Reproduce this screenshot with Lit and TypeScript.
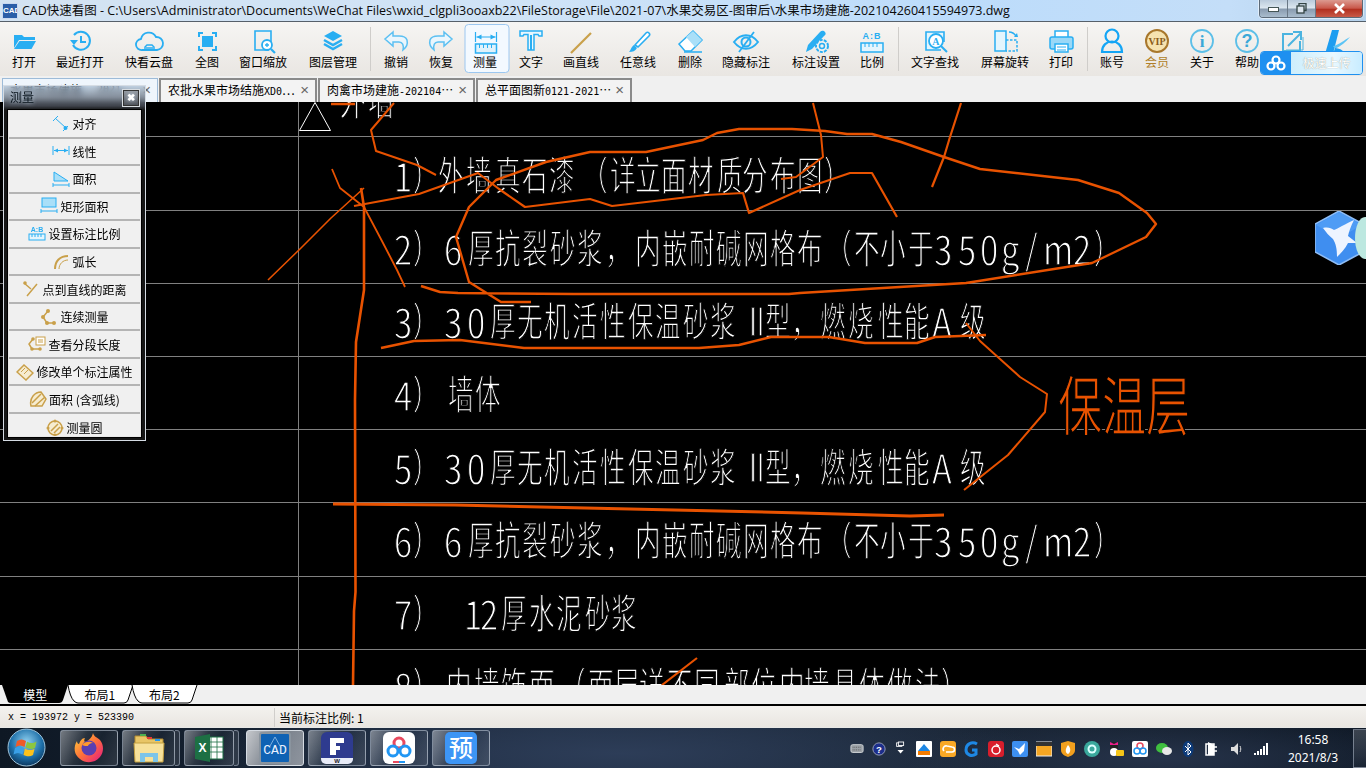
import { LitElement, html, css, svg } from "lit";
import { customElement } from "lit/decorators.js";

const B = "#29aef2";
const G = "#c9a04a";

const ic = (body: any, size = 32) => html`<svg class="ic" width=${size} height=${size} viewBox="0 0 ${size} ${size}">${body}</svg>`;

const toolIcons: Record<string, any> = {
  open: svg`<path d="M6 10h8l2 2h11v3H11L6 23z" fill="${B}"/><path d="M6 24l5.500-8H28l-4.500 8z" fill="${B}"/>`,
  recent: svg`<path d="M10 10a9 9 0 1 1-1 10" fill="none" stroke="${B}" stroke-width="2"/><path d="M6 15h8l-4 5z" fill="${B}"/><path d="M17 11v6h5" fill="none" stroke="${B}" stroke-width="2"/>`,
  cloud: svg`<path d="M9 25a5.500 5.500 0 0 1-1-11 8 8 0 0 1 15-2 6.500 6.500 0 0 1 1 13z" fill="none" stroke="${B}" stroke-width="1.800"/><path d="M12 25v-3l2-2h5l2 2v3M13 23h7" fill="none" stroke="${B}" stroke-width="1.500"/>`,
  full: svg`<path d="M8 12V8h4M21 8h4v4M25 21v4h-4M12 25H8v-4" fill="none" stroke="${B}" stroke-width="2"/><rect x="11" y="11" width="11" height="11" fill="${B}"/>`,
  zoom: svg`<path d="M22 25H8V6h16v11" fill="none" stroke="${B}" stroke-width="1.600"/><circle cx="20" cy="20" r="5" fill="#fff" stroke="${B}" stroke-width="1.800"/><path d="M18 20h4M20 18v4" stroke="${B}" stroke-width="1.300"/><path d="M24 24l4 4" stroke="${B}" stroke-width="2.200"/>`,
  layer: svg`<path d="M16 6l9 5-9 5-9-5z" fill="${B}"/><path d="M7 15l9 5 9-5M7 19l9 5 9-5" fill="none" stroke="${B}" stroke-width="2.500"/>`,
  undo: svg`<path d="M13 7l-8 7 8 7v-4h6c3.500 0 5 3 4 8 4-3 5-6 4-10-1-3-4-4-8-4h-6z" fill="#eaf6fd" stroke="#5cc0f2" stroke-width="1.500"/>`,
  redo: svg`<path d="M19 7l8 7-8 7v-4h-6c-3.500 0-5 3-4 8-4-3-5-6-4-10 1-3 4-4 8-4h6z" fill="#eaf6fd" stroke="#5cc0f2" stroke-width="1.500"/>`,
  measure: svg`<path d="M6 7v10M27 7v10M7 12h19" stroke="${B}" stroke-width="1.200" fill="none"/><path d="M7 12l5-2.500v5zM26 12l-5-2.500v5z" fill="${B}"/><rect x="6" y="19" width="21" height="9" fill="#dff2fc" stroke="${B}" stroke-width="1.500"/><path d="M10 19v4M14 19v4M18 19v4M22 19v4" stroke="${B}"/>`,
  text: svg`<path d="M5 6h22v5h-3l-1-1.500h-4V25h-6V9.500H9L8 11H5z" fill="#e8f7fe" stroke="${B}" stroke-width="1.500"/><path d="M15 10h2v15h-2z" fill="${B}"/>`,
  line: svg`<path d="M6 28L26 8" stroke="${G}" stroke-width="2.200"/>`,
  brush: svg`<path d="M13 20L24 8c2-2 5 1 3 3L16 22z" fill="#fff" stroke="${B}" stroke-width="1.600"/><path d="M12 20l3 3c-2 3-4 4-8 4 2-2 2-5 5-7z" fill="${B}"/>`,
  eraser: svg`<path d="M5 19L19 6l9 9-11 11h-6z" fill="#fff" stroke="${B}" stroke-width="1.500"/><path d="M12 12l9 10 7-7-9-9z" fill="#a9dff8"/><path d="M10 27h18" stroke="${B}" stroke-width="1.500"/>`,
  eye: svg`<path d="M4 17c7-9 17-9 24 0-7 9-17 9-24 0z" fill="none" stroke="${B}" stroke-width="2"/><circle cx="16" cy="17" r="4.500" fill="none" stroke="${B}" stroke-width="2"/><path d="M9 27L24 7" stroke="${B}" stroke-width="1.800"/>`,
  gear: svg`<path d="M6 27l2-7L20 7c2-2 4-1 5 0s1 3-1 4L12 24z" fill="${B}"/><circle cx="22" cy="21" r="6" fill="#f2f2f0" stroke="${B}" stroke-width="2" stroke-dasharray="3 1.200"/><circle cx="22" cy="21" r="2.500" fill="none" stroke="${B}" stroke-width="1.500"/>`,
  ratio: svg`<text x="16" y="14" text-anchor="middle" class="ab">A:B</text><rect x="5" y="18" width="22" height="9" fill="#e4f5fd" stroke="${B}" stroke-width="1.500"/><path d="M9 18v4M13 18v4M17 18v4M21 18v4" stroke="${B}"/>`,
  find: svg`<path d="M22 25H7V7h18v10" fill="#e4f5fd" stroke="${B}" stroke-width="1.600"/><circle cx="17" cy="16" r="7" fill="#fff" stroke="${B}" stroke-width="1.800"/><text x="17" y="20" text-anchor="middle" class="find">A</text><path d="M22 21l6 6" stroke="${B}" stroke-width="2"/>`,
  rotate: svg`<rect x="6" y="6" width="11" height="20" fill="#e4f5fd" stroke="${B}" stroke-width="1.500"/><path d="M17 15h11v11H17" fill="none" stroke="${B}" stroke-width="1.500" stroke-dasharray="2.500 1.500"/><path d="M20 7c3 0 5 1 7 4" fill="none" stroke="${B}" stroke-width="1.500"/><path d="M25 12l4 0-1-4z" fill="${B}"/>`,
  print: svg`<rect x="10" y="6" width="13" height="7" fill="#fff" stroke="${B}" stroke-width="1.500"/><rect x="5" y="12" width="23" height="12" rx="2" fill="#9ad8f7" stroke="${B}" stroke-width="1.500"/><rect x="10" y="19" width="13" height="8" fill="#fff" stroke="${B}" stroke-width="1.500"/><path d="M12 22h9M12 25h9" stroke="${B}"/>`,
  user: svg`<circle cx="16" cy="11" r="6.500" fill="none" stroke="#14a5f5" stroke-width="2.200"/><path d="M6 27c0-14 20-14 20 0z" fill="none" stroke="#14a5f5" stroke-width="2.200"/>`,
  vip: svg`<circle cx="16" cy="16" r="11" fill="#f6e3b0" stroke="#a8772c" stroke-width="2"/><text x="16" y="19.500" text-anchor="middle" class="vip">VIP</text>`,
  info: svg`<circle cx="16" cy="16" r="11" fill="none" stroke="#5cbfe8" stroke-width="1.800"/><text x="16" y="22" text-anchor="middle" class="inf">i</text>`,
  help: svg`<circle cx="16" cy="16" r="11" fill="none" stroke="#5cbfe8" stroke-width="1.800"/><text x="16" y="22" text-anchor="middle" class="hlp">?</text>`,
  out: svg`<path d="M24 16v10H7V9h10" fill="none" stroke="#4cb4e0" stroke-width="2"/><path d="M10 25h17V12" fill="none" stroke="#4cb4e0" stroke-width="1"/><path d="M12 21L25 8M17 7h8v8" fill="none" stroke="#4cb4e0" stroke-width="2"/>`,
  k: svg`<path d="M11 5h7L12 29H4z" fill="#1d9df0"/><path d="M12 21c6-1 11-6 17-9-4 5-9 9-15 12z" fill="#5cc4f5"/><path d="M14 23c4 0 8 2 11 6H12z" fill="#1d9df0"/>`,
};

const tools: [string, string, number][] = [
  ["打开", "open", 24], ["最近打开", "recent", 80], ["快看云盘", "cloud", 149], ["全图", "full", 207],
  ["窗口缩放", "zoom", 263], ["图层管理", "layer", 333], ["|", "", 370], ["撤销", "undo", 396], ["恢复", "redo", 441],
  ["测量", "measure", 486.5], ["文字", "text", 531], ["画直线", "line", 581], ["任意线", "brush", 638], ["删除", "eraser", 690],
  ["隐藏标注", "eye", 746], ["标注设置", "gear", 816], ["比例", "ratio", 872], ["|", "", 898], ["文字查找", "find", 935],
  ["屏幕旋转", "rotate", 1005], ["打印", "print", 1061], ["|", "", 1087], ["账号", "user", 1112], ["会员", "vip", 1157],
  ["关于", "info", 1202], ["帮助", "help", 1247], ["", "out", 1292], ["", "k", 1337],
];

const panelIcons: Record<string, any> = {
  align: svg`<path d="M3 3l11 10" stroke="${B}" fill="none"/><path d="M1 6l5-5M11 16l5-5" stroke="${B}"/><circle cx="13.500" cy="13" r="2" fill="${B}"/>`,
  linear: svg`<path d="M1 4v9M17 4v9M2 8.500h14" stroke="${B}" fill="none"/><path d="M2 8.500l4-2v4zM16 8.500l-4-2v4z" fill="${B}"/>`,
  area: svg`<path d="M2 2v9h14z" fill="#a9dff8" stroke="${B}"/><path d="M1 13v4M17 13v4M1 15h16" stroke="${B}"/>`,
  rect: svg`<rect x="2" y="1" width="14" height="9" fill="#a9dff8" stroke="${B}"/><path d="M1 12v4M17 12v4M1 14h16" stroke="${B}"/>`,
  ratio: svg`<text x="9" y="7" text-anchor="middle" class="ab2">A:B</text><rect x="1" y="9" width="16" height="6" fill="#e4f5fd" stroke="${B}"/><path d="M4 9v3M7 9v3M10 9v3M13 9v3" stroke="${B}"/>`,
  arc: svg`<path d="M3 16C3 8 8 3 16 3" fill="none" stroke="${G}" stroke-width="2"/><path d="M7 16c0-5 4-9 9-9" fill="none" stroke="${G}"/>`,
  dist: svg`<path d="M5 16L15 4M2 3l7 6" stroke="${G}" stroke-width="1.500" fill="none"/><circle cx="3" cy="3" r="1.800" fill="${G}"/>`,
  multi: svg`<path d="M8 3L3 9l4 6h8" fill="none" stroke="${G}" stroke-width="1.500"/><circle cx="8" cy="3" r="2" fill="${G}"/><circle cx="3" cy="9" r="2" fill="${G}"/><circle cx="7" cy="15" r="2" fill="${G}"/><circle cx="14" cy="15" r="2" fill="${G}"/>`,
  seg: svg`<path d="M5 4L1 9l3 5h8" fill="none" stroke="${G}" stroke-width="1.500"/><circle cx="5" cy="4" r="1.800" fill="${G}"/><circle cx="4" cy="14" r="1.800" fill="${G}"/><circle cx="12" cy="14" r="1.800" fill="${G}"/><rect x="8" y="2" width="9" height="8" fill="#fff" stroke="${G}"/><path d="M10 5h5M10 7h5" stroke="${G}"/>`,
  edit: svg`<path d="M1 9l7-7 9 8-7 7z" fill="#f6ecd0" stroke="${G}" stroke-width="1.500"/><path d="M5 9l4-4M8 11l4-4" stroke="${G}"/>`,
  aarc: svg`<path d="M2 16C0 8 6 2 12 2l5 7-4 7z" fill="#f6ecd0" stroke="${G}" stroke-width="1.500"/><path d="M3 13L12 4M6 16L16 7" stroke="${G}" stroke-width="1.500"/>`,
  circle: svg`<circle cx="9" cy="9" r="7" fill="#f6ecd0" stroke="${G}" stroke-width="1.500"/><path d="M5 12l7-7M8 14l6-6" stroke="${G}" stroke-width="1.500"/><circle cx="2" cy="9" r="1.500" fill="${G}"/><circle cx="16" cy="9" r="1.500" fill="${G}"/><circle cx="9" cy="2" r="1.500" fill="${G}"/><circle cx="9" cy="16" r="1.500" fill="${G}"/>`,
};

const panelRows: [string, string][] = [
  ["align", "对齐"], ["linear", "线性"], ["area", "面积"], ["rect", "矩形面积"], ["ratio", "设置标注比例"], ["arc", "弧长"],
  ["dist", "点到直线的距离"], ["multi", "连续测量"], ["seg", "查看分段长度"], ["edit", "修改单个标注属性"], ["aarc", "面积 (含弧线)"], ["circle", "测量圆"],
];

type Seg = [number, string];
const r3 = (n: string): Seg[] => [
  [394, n], [413, "）"], [444, "3"], [467, "0"], [490, "厚"], [517, "无"], [544, "机"], [572, "活"], [600, "性"], [628, "保"], [655, "温"], [683, "砂"], [710, "浆"],
  [744, "Ⅱ"], [765, "型"], [791, "，"], [820, "燃"], [848, "烧"], [878, "性"], [904, "能"], [932, "A"], [960, "级"],
];
const r2 = (n: string): Seg[] => [
  [394, n], [413, "）"], [444, "6"], [468, "厚"], [495, "抗"], [522, "裂"], [550, "砂"], [577, "浆"], [605, "，"], [635, "内"], [662, "嵌"], [689, "耐"], [716, "碱"], [743, "网"], [770, "格"], [797, "布"],
  [826, "（"], [854, "不"], [880, "小"], [908, "于"], [934, "3"], [958, "5"], [980, "0"], [1001, "g"], [1025, "/"], [1043, "m"], [1073, "2"], [1094, "）"],
];
const rows: [number, Seg[]][] = [
  [117, [[340, "外"], [368, "墙"]]],
  [192, [[394, "1"], [413, "）"], [438, "外"], [466, "墙"], [495, "真"], [522, "石"], [549, "漆"], [582, "（"], [610, "详"], [635, "立"], [661, "面"], [688, "材"], [717, "质"], [742, "分"], [770, "布"], [797, "图"], [824, "）"]]],
  [265, r2("2")],
  [338, r3("3")],
  [411, [[394, "4"], [413, "）"], [448, "墙"], [475, "体"]]],
  [484, r3("5")],
  [557, r2("6")],
  [630, [[394, "7"], [413, "）"], [464, "1"], [480, "2"], [501, "厚"], [529, "水"], [556, "泥"], [585, "砂"], [611, "浆"]]],
  [703, [[394, "8"], [413, "）"], [446, "内"], [474, "墙"], [501, "饰"], [529, "面"], [560, "（"], [588, "面"], [614, "层"], [639, "详"], [667, "不"], [694, "同"], [724, "部"], [751, "位"], [779, "内"], [804, "墙"], [832, "具"], [859, "体"], [887, "做"], [915, "法"], [941, "）"]]],
];
const isAscii = (t: string) => /^[\x21-\x7e]$/.test(t);

const strokes: [string, number][] = [
  ["394,103 371,130 376,151 417,165 436,175", 2],
  ["331,104 355,104", 2.5],
  ["354,206 419,194 478,173 499,189 525,207 590,199 612,206 706,195 743,193 749,213 800,190 850,173 872,173 897,217", 2.2],
  ["781,179 796,177 823,157 821,135 813,103", 2],
  ["531,302 501,302 469,282 456,237 469,207 496,180 546,162 590,152 646,152 703,140 717,133 739,129 792,129 825,131 847,134 872,134 901,142 944,157 980,169 1078,180 1119,193 1147,213 1156,224 1146,237 1092,263 966,283 800,293 789,294 574,294 458,293 440,292 421,286", 2.4],
  ["268,280 301,248 331,218 364,188", 1.6],
  ["332,169 340,188 364,207 383,243 397,270 405,287", 1.8],
  ["361,188 364,207 364,290 356,342 355,400 355.500,592 354,611 353,685", 2.6],
  ["381,348 414,341 460,340 524,348 699,348 739,345 771,337 829,337 865,343 917,343 935,337 986,335", 2.6],
  ["966,323 980,341 1020,377 1047,394 1045,412 1008,455 964,490", 2],
  ["333,504 455,505 719,511 802,513 910,516 944,515", 3],
  ["662,685 697,658", 2.2],
  ["961,103 950,137 944,157 932,187", 2.2],
];

const tray: any[] = [
  [14, svg`<rect x="1" y="3" width="14" height="9" rx="2" fill="#9aa0a6" stroke="#d5d8da"/><path d="M3 6h10M3 9h10" stroke="#555" stroke-dasharray="1 1"/>`],
  [14, svg`<circle cx="8" cy="8" r="7" fill="#1c2e8c" stroke="#a0a8c0"/><text x="8" y="12" text-anchor="middle" class="tq">?</text>`],
  [14, svg`<rect x="3" y="1" width="6" height="4" fill="none" stroke="#fff"/><rect x="5" y="0" width="6" height="4" fill="#243044" stroke="#fff"/><path d="M4 10h7l-3.500 4z" fill="#fff" transform="translate(0 -1)"/>`],
  [16, svg`<rect width="16" height="16" rx="1" fill="#fff"/><path d="M2 10l6-7 6 7z" fill="#1e88e5"/><rect x="2" y="10" width="12" height="4" fill="#f57c00"/>`],
  [16, svg`<rect width="16" height="16" rx="3" fill="#f9a825"/><path d="M4 10a3 3 0 0 1 3-5l5 1a2.500 2.500 0 0 1 0 5H6" fill="none" stroke="#fff" stroke-width="1.600"/>`],
  [16, svg`<path d="M13 3C8 0 2 3 2 9c0 5 6 7 10 4v-4H8" fill="none" stroke="#1e88e5" stroke-width="3"/>`],
  [16, svg`<rect width="16" height="16" rx="3" fill="#d81e2c"/><circle cx="8" cy="9" r="4" fill="none" stroke="#fff" stroke-width="1.500"/><path d="M8 3l3 2" stroke="#fff" stroke-width="1.500"/>`],
  [16, svg`<rect width="16" height="16" rx="2" fill="#3d8ff0"/><path d="M2 6l5 2 6-6-1 8-4 4-2-4z" fill="#fff"/>`],
  [16, svg`<rect y="1" width="16" height="14" fill="#f5a623" stroke="#eee"/><rect y="1" width="16" height="4" fill="#333"/>`],
  [16, svg`<path d="M1 2l7-2 7 2v7c0 4-4 6-7 7-3-1-7-3-7-7z" fill="#f2a01e"/><path d="M8 4c3 3 3 7 0 9-3-1-3-5 0-9z" fill="#fff"/>`],
  [16, svg`<circle cx="8" cy="8" r="8" fill="#3aa89c"/><circle cx="8" cy="8" r="4.500" fill="#dff"/><circle cx="8" cy="8" r="2.500" fill="#3aa89c"/>`],
  [16, svg`<ellipse cx="6" cy="6" rx="4" ry="5" fill="#222"/><ellipse cx="6" cy="11" rx="4" ry="4" fill="#fff"/><path d="M2 1l4 2 4-2v3H2z" fill="#e91e8c"/><rect x="8" y="9" width="8" height="6" rx="1" fill="#f5c518"/>`],
  [16, svg`<rect width="16" height="16" rx="2" fill="#fff"/><circle cx="8" cy="5" r="3" fill="none" stroke="#e84a5f" stroke-width="1.500"/><circle cx="5" cy="10" r="3" fill="none" stroke="#2196f3" stroke-width="1.500"/><circle cx="11" cy="10" r="3" fill="none" stroke="#2196f3" stroke-width="1.500"/>`],
  [16, svg`<ellipse cx="6" cy="7" rx="6" ry="5" fill="#3fbf3f"/><ellipse cx="11" cy="10" rx="5" ry="4" fill="#e8e8e8"/>`],
  [16, svg`<ellipse cx="8" cy="8" rx="5.500" ry="8" fill="#0d3b7a"/><path d="M5 5l6 6-3 3V2l3 3-6 6" fill="none" stroke="#fff"/>`],
  [16, svg`<path d="M2 3h8v11H2zM10 6h3M10 10h3" fill="none" stroke="#fff" stroke-width="1.500"/><path d="M4 1v13h6V4z" fill="#fff"/>`],
  [16, svg`<path d="M3 6h3l4-4v12l-4-4H3z" fill="#ddd"/><path d="M12 5c1 2 1 4 0 6" stroke="#ddd" fill="none"/>`],
  [16, svg`<path d="M2 12h2v2H2zM5 10h2v4H5zM8 8h2v6H8zM11 5h2v9h-2zM14 2h2v12h-2z" fill="#fff"/>`],
];

@customElement("app-root")
export class AppRoot extends LitElement {
  static styles = css`
    :host { display: block; width: 1366px; height: 768px; position: relative; overflow: hidden; font-family: "Noto Sans CJK SC", sans-serif; font-size: 12px; color: #000; }
    .root { display: grid; grid-template-rows: 22px 54px 26px 583px 21px 21px 41px; height: 768px; }

    .title { display: flex; align-items: flex-start; background: linear-gradient(90deg, #d3e3f2 0%, #cfe3f7 40%, #bcdcfb 70%, #c4def8 90%, #b6d2ec 100%); border-bottom: 1px solid #56606a; box-sizing: border-box; }
    .appico { width: 16px; height: 16px; margin: 3px 4px 0 2px; background: #2a5ea8; border: 1px solid #c8d8f0; box-sizing: border-box; color: #fff; font: 700 8px/14px "Liberation Sans", sans-serif; text-align: center; overflow: hidden; }
    .ttext { font-family: "Open Sans", "Noto Sans CJK SC", sans-serif; font-size: 12.500px; line-height: 21px; white-space: nowrap; color: #0a0a0a; flex: 1; }
    .wbtns { display: flex; height: 17px; margin-right: 3px; border: 1px solid #5c6a78; border-top: 0; border-radius: 0 0 4px 4px; overflow: hidden; box-shadow: 0 0 0 1px rgba(255,255,255,.5); }
    .wb { width: 27px; display: flex; align-items: center; justify-content: center; background: linear-gradient(#b9cadb, #dbe6ef 45%, #8a9cb0 55%, #a9bccd); border-right: 1px solid #6a7886; }
    .wb.close { width: 46px; border: 0; background: linear-gradient(#dc9a90, #c9584a 48%, #b23020 55%, #c85a48); }

    .toolbar { display: flex; background: linear-gradient(#f6f5f3, #e9e6e2); position: relative; }
    .tool { flex: none; display: flex; flex-direction: column; align-items: center; box-sizing: border-box; height: 49px; margin-top: 2px; border: 1px solid transparent; border-radius: 4px; position: absolute; top: 0; transform: translateX(-50%); padding: 0 8px; white-space: nowrap; }
    .tool.sel { background: #f3f9ff; border-color: #9cc7f0; width: 45px; padding: 0 11px 0 8px; }
    .tool .ic { display: block; flex: none; }
    .tool span { line-height: 16px; margin-top: -3px; }
    .tool.gold span { color: #b07f28; }
    .sep { position: absolute; top: 5px; height: 44px; width: 1px; background: #cfcdca; }
    .ab { font: 700 9px "Liberation Sans", sans-serif; fill: #29aef2; letter-spacing: 1px; }
    .ab2 { font: 700 7px "Liberation Sans", sans-serif; fill: #29aef2; }
    .find { font: 700 10px "Liberation Serif", serif; fill: #29aef2; }
    .vip { font: 700 10px "Liberation Serif", serif; fill: #8a5c18; }
    .inf { font: 700 17px "Liberation Serif", serif; fill: #3ba8d8; }
    .hlp { font: 700 18px "Liberation Sans", sans-serif; fill: #3ba8d8; }
    .tq { font: 700 11px "Liberation Sans", sans-serif; fill: #fff; }

    .tabs { display: flex; align-items: flex-end; background: #f0f0f0; padding-left: 2px; gap: 1px; }
    .tab { height: 24px; box-sizing: border-box; border: 2px solid #8a8a8a; border-bottom: 0; display: flex; align-items: center; padding: 0 6px 3px 7px; justify-content: space-between; background: #f3f3f3; white-space: nowrap; }
    .tab.on { background: #eef5fc; border-color: #9dbbd8; border-width: 1px; }
    .tab b { font-weight: 400; }
    .tab i { font-style: normal; font-family: "DejaVu Sans Mono", monospace; font-size: 10px; }
    .x { color: #666; font: 400 15px/15px "Liberation Sans", sans-serif; }

    .canvas { position: relative; background: #000; overflow: hidden; }
    .art { position: absolute; left: 0; top: 0; display: block; will-change: transform; }
    .cad { font-family: "Noto Sans CJK SC", sans-serif; font-size: 40px; fill: #fff; stroke: #000; stroke-width: 1.300px; }
    .num { font-family: "Noto Sans CJK SC", sans-serif; font-size: 41px; fill: #fff; stroke: #000; stroke-width: 1.300px; }
    .hand { font-family: "Noto Sans CJK SC", sans-serif; font-size: 65px; fill: #e85200; stroke: #000; stroke-width: 1.600px; }
    .bird { position: absolute; left: 1315px; top: 109px; display: block; }

    .layouts { position: relative; background: #f0f0f0; border-bottom: 2px solid #000; box-sizing: border-box; display: flex; padding-left: 3px; }
    .layouts svg { position: absolute; left: 0; top: 0; }
    .lt { position: relative; width: 64.500px; text-align: center; line-height: 19px; }
    .lt.on { color: #fff; }

    .status { display: flex; background: linear-gradient(#f4f2ef, #e9e6e1); align-items: center; padding-top: 1px; box-sizing: border-box; }
    .coord { font: 10px "Liberation Mono", monospace; width: 266px; padding-left: 8px; flex: none; }
    .ratio { border-left: 1px solid #d0cecb; padding-left: 4px; line-height: 19px; }

    .task { display: flex; align-items: stretch; position: relative; border-top: 1px solid #e8e8e6; box-sizing: border-box; background: radial-gradient(ellipse 420px 60px at 620px 25px, #2d3d58, transparent), radial-gradient(ellipse 260px 40px at 1160px 30px, #26334a, transparent), linear-gradient(90deg, #0e1824, #1e2c40 40%, #1a2636 70%, #111b29); }
    .orb { width: 39px; height: 39px; margin: 0 14px 0 7px; flex: none; }
    .tb { flex: none; width: 58px; margin: 2px 4px 0 0; height: 36px; box-sizing: border-box; border: 1px solid rgba(190,200,215,.55); border-radius: 3px; display: flex; align-items: center; justify-content: center; background: linear-gradient(115deg, rgba(255,255,255,.42), rgba(255,255,255,.1) 38%, rgba(255,255,255,.03) 60%, rgba(255,255,255,.12)); position: relative; }
    .tb.active { background: linear-gradient(115deg, rgba(255,255,255,.75), rgba(255,255,255,.42) 50%, rgba(255,255,255,.5)); border-color: #d5dbe2; }
    .tb.s1 { width: 53px; margin-right: 9px; }
    .tb.s2 { width: 50px; margin-right: 12px; }
    .tb.s1::after, .tb.s2::after { content: ""; position: absolute; top: -1px; bottom: -1px; right: -6px; width: 4px; border: 1px solid rgba(190,200,215,.5); border-left: 0; border-radius: 0 3px 3px 0; background: rgba(255,255,255,.1); }
    .tray { margin-left: auto; display: flex; align-items: center; gap: 8px; padding-top: 2px; }
    .clock { width: 70px; margin-left: 10px; color: #fff; font: 12px/18px "Noto Sans", sans-serif; text-align: center; padding-top: 3px; flex: none; }
    .desk { width: 13px; margin: 1px 0 0 5px; flex: none; border: 1px solid rgba(190,200,215,.5); border-right: 0; box-sizing: border-box; background: linear-gradient(rgba(255,255,255,.18), rgba(255,255,255,.02)); }

    .panel { position: absolute; left: 3px; top: 85px; width: 143px; height: 356px; box-sizing: border-box; border: 1px solid #d5dce4; padding: 0 4px 3px 4px; display: flex; flex-direction: column; background: linear-gradient(rgba(150,175,200,.55) 0, rgba(70,75,85,.85) 20px, #161616 24px); backdrop-filter: blur(3px); }
    .phead { height: 24px; flex: none; display: flex; align-items: flex-start; justify-content: space-between; color: #051018; font-size: 12px; line-height: 22px; padding: 0 1px 0 2px; text-shadow: 0 0 4px #cde; }
    .pclose { width: 18px; height: 18px; margin-top: 3px; box-sizing: border-box; border: 1px solid #d8dde2; background: linear-gradient(#9aa0a8, #4a4e56); display: flex; align-items: center; justify-content: center; color: #fff; font: 700 10px/10px "Liberation Sans", sans-serif; box-shadow: inset 0 0 0 1px #333; }
    .pbody { flex: 1; min-height: 0; overflow: hidden; border: 1px solid #e8e8e8; box-shadow: 0 0 0 1px #000; background: #f0f0f0; display: flex; flex-direction: column; }
    .prow { flex: 0 0 27.550px; box-sizing: border-box; display: flex; align-items: center; justify-content: center; gap: 2px; border-bottom: 2px solid #b4b4b4; background: #f0f0f0; white-space: nowrap; font-size: 12px; }
    .prow:last-child { border-bottom: 0; }

    .bd { position: absolute; left: 1260px; top: 51px; width: 103px; height: 24px; box-sizing: border-box; border: 1px solid #1e90f0; border-radius: 4px; display: flex; overflow: hidden; }
    .bdl { width: 30px; background: #1e90f0; display: flex; align-items: center; justify-content: center; flex: none; }
    .bdr { flex: 1; background: linear-gradient(90deg, #cdeefc, #e8f8ff 60%, #c8ecff); color: #fff; text-align: center; line-height: 22px; font-size: 12px; text-shadow: 0 0 1px #887; }
  `;

  render() {
    return html`
      <div class="root">
        <div class="title">
          <div class="appico">CAD</div>
          <div class="ttext">CAD快速看图 - C:\\Users\\Administrator\\Documents\\WeChat Files\\wxid_clgpli3ooaxb22\\FileStorage\\File\\2021-07\\水果交易区-图审后\\水果市场建施-202104260415594973.dwg</div>
          <div class="wbtns">
            <div class="wb"><svg width="11" height="6"><rect x="0.500" y="1.500" width="10" height="4" fill="#fff" stroke="#455"/></svg></div>
            <div class="wb"><svg width="11" height="11"><rect x="3" y="0.500" width="7" height="7" fill="none" stroke="#344" stroke-width="1.300"/><rect x="1" y="3" width="7" height="7" fill="#dde6ee" stroke="#344" stroke-width="1.300"/></svg></div>
            <div class="wb close"><svg width="13" height="11"><path d="M2 1l9 9M11 1l-9 9" stroke="#fff" stroke-width="2.600"/></svg></div>
          </div>
        </div>

        <div class="toolbar">
          ${tools.map(([label, icon, cx]) => label === "|"
            ? html`<div class="sep" style="left:${cx}px"></div>`
            : html`<div class="tool ${icon === "measure" ? "sel" : ""} ${icon === "vip" ? "gold" : ""}" style="left:${cx}px">${ic(toolIcons[icon])}<span>${label}</span></div>`)}
        </div>

        <div class="tabs">
          <div class="tab on" style="width:156px"><b>水果市场建施</b><i>2021…</i><span class="x">×</span></div>
          <div class="tab" style="width:158px"><span>农批水果市场结施<i>XD0</i>⋯</span><span class="x">×</span></div>
          <div class="tab" style="width:157px"><span>肉禽市场建施<i>-202104</i>⋯</span><span class="x">×</span></div>
          <div class="tab" style="width:156px"><span>总平面图新<i>0121-2021</i>⋯</span><span class="x">×</span></div>
        </div>

        <div class="canvas">
          <svg class="art" width="1366" height="583" viewBox="0 102 1366 583">
            ${rows.map(([y, segs]) => segs.map(([x, t]) => isAscii(t)
              ? svg`<text class="num" transform="translate(${x},${y}) scale(.8,1)">${t}</text>`
              : svg`<text class="cad" transform="translate(${x},${y - 2}) scale(.64,1)">${t}</text>`))}
            ${[136, 210, 283, 356, 429, 502, 576, 649].map((y) => svg`<rect x="0" y=${y} width="1366" height="1" fill="#808080"/>`)}
            <rect x="298" y="102" width="1" height="583" fill="#808080"/>
            <path d="M299.500 130.500h31l-15.500-28z" fill="none" stroke="#fff"/>
            ${strokes.map(([p, w]) => svg`<polyline points=${p} fill="none" stroke="#e85200" stroke-width=${w} stroke-linejoin="round"/>`)}
            <text class="hand" transform="translate(1058,430) scale(.68,1)">保</text>
            <text class="hand" transform="translate(1102,430) scale(.68,1)">温</text>
            <text class="hand" transform="translate(1146,430) scale(.68,1)">层</text>
          </svg>
          <svg class="bird" width="51" height="54" viewBox="0 0 51 54">
            <path d="M24 0l24 13v28L24 54 0 41V13z" fill="#3f8ef0" stroke="#8fbdf5" stroke-width="1.500"/>
            <path d="M24 1l23 13L24 27 1 14z" fill="#4f9cf5"/>
            <path d="M8 17c5-1 8 0 11 2 5-2 11-6 20-10-3 6-5 11-6 16l9 7h-9c-3 6-7 10-11 14 0-8-1-13-4-18-4-3-7-7-10-11z" fill="#eef4ff"/>
            <ellipse cx="50" cy="27" rx="10" ry="21" fill="#bde8e0"/>
          </svg>
        </div>

        <div class="layouts">
          <svg width="200" height="20">
            <path d="M2 0l6 17q1 1 3 1h48q3 0 4-3l5-15z" fill="#000"/>
            <path d="M68 0q2 12 6 16 2 2 4 2h46q3 0 4-3l5-15" fill="#fff" stroke="#000"/>
            <path d="M132 0q2 12 6 16 2 2 4 2h46q3 0 4-3l5-15" fill="#fff" stroke="#000"/>
          </svg>
          <div class="lt on">模型</div><div class="lt">布局1</div><div class="lt">布局2</div>
        </div>

        <div class="status">
          <div class="coord">x = 193972 y = 523390</div>
          <div class="ratio">当前标注比例: 1</div>
        </div>

        <div class="task">
          <svg class="orb" viewBox="0 0 39 39">
            <defs><radialGradient id="o" cx=".5" cy=".35" r=".7"><stop offset="0" stop-color="#8fd0f0"/><stop offset=".6" stop-color="#1d6fa8"/><stop offset="1" stop-color="#0a2c50"/></radialGradient></defs>
            <circle cx="19.500" cy="19.500" r="18.500" fill="url(#o)" stroke="#9fc5dc"/>
            <path d="M10 13c3-2 6-2 9 0l-1.500 6c-3-2-6-2-9 0z" fill="#f05a28"/>
            <path d="M20 13.500c3 2 6 2 9.500 0L28 20c-3 1.500-6 1-9.500-.5z" fill="#8cc63f"/>
            <path d="M8 20c3-2 6-2 9 0l-1.500 6.500c-3-2-6-2-9 0z" fill="#3aa0e8"/>
            <path d="M18 20.500c3 2 6 2 9.500 .5L26 27c-3 2-6 1.500-9.500 0z" fill="#fcc21b"/>
          </svg>
          <div class="tb"><svg width="32" height="32" viewBox="0 0 32 32"><defs><linearGradient id="ff" x1="0" y1="0" x2="1" y2="1"><stop offset="0" stop-color="#ffd43b"/><stop offset=".5" stop-color="#ff7139"/><stop offset="1" stop-color="#e31587"/></linearGradient></defs><path d="M20 1c1 4 4 4 7 7 4 5 4 12 0 17-5 6-14 7-20 2C1 23 0 15 4 9c0 2 1 3 2 3 1-3 3-6 6-6-1 2-1 3 0 4 3-1 7-4 8-9z" fill="url(#ff)"/><circle cx="16" cy="16" r="7.500" fill="#5b3fb0"/><path d="M9 13c3-4 8-4 11-2-3 0-5 2-5 3-2 0-4 0-6-1z" fill="#ff9a2e"/></svg></div>
          <div class="tb s1"><svg width="34" height="32" viewBox="0 0 34 32"><path d="M3 4h11l2 3h15v5H3z" fill="#e8c566" stroke="#b08a30"/><rect x="8" y="2" width="6" height="2" fill="#4caf50"/><rect x="15" y="5" width="5" height="2" fill="#e53935"/><rect x="23" y="7" width="5" height="2" fill="#2196f3"/><path d="M2 11h30l-1 19H3z" fill="#f7e19a" stroke="#c4a040"/><path d="M8 30v-9h18v9h-5v-5h-8v5z" fill="#7cc4e8"/></svg></div>
          <div class="tb s2"><svg width="32" height="32" viewBox="0 0 32 32"><rect x="13" y="5" width="17" height="22" fill="#fff" stroke="#1d7044"/><path d="M18 5v22M24 5v22M13 10h17M13 15h17M13 20h17" stroke="#1d7044" stroke-width=".800"/><path d="M2 5l15-3v28L2 27z" fill="#1d7044"/><text x="9.500" y="20" text-anchor="middle" style="font:700 12px 'Liberation Sans',sans-serif;fill:#fff">X</text></svg></div>
          <div class="tb active"><svg width="32" height="32" viewBox="0 0 32 32"><rect x="1" y="1" width="30" height="30" rx="2" fill="#0f62b4" stroke="#8a949e" stroke-width="2"/><text x="16" y="22" text-anchor="middle" style="font:400 13px 'Liberation Mono',monospace;fill:#e8f0ff">CAD</text><path d="M16 5l-5 9M16 5l5 9" stroke="#7fb0e0"/></svg></div>
          <div class="tb"><svg width="32" height="32" viewBox="0 0 32 32"><rect width="32" height="32" rx="6" fill="#2e3b8f"/><path d="M9 6h14v5H15v3h4v4h-4v5H9z" fill="#fff"/><path d="M0 26h32v1a5 5 0 0 1-5 5H5a5 5 0 0 1-5-5z" fill="#e9ecf8"/><text x="16" y="31" text-anchor="middle" style="font:700 6px 'Liberation Sans',sans-serif;fill:#222">W</text></svg></div>
          <div class="tb"><svg width="32" height="32" viewBox="0 0 32 32"><rect width="32" height="32" rx="6" fill="#fff"/><circle cx="16" cy="11" r="5" fill="none" stroke="#e84a5f" stroke-width="3"/><circle cx="10" cy="19" r="5" fill="none" stroke="#2196f3" stroke-width="3"/><circle cx="22" cy="19" r="5" fill="none" stroke="#2196f3" stroke-width="3"/><rect x="10" y="29" width="6" height="2" fill="#e84a5f"/><rect x="16" y="29" width="6" height="2" fill="#2196f3"/></svg></div>
          <div class="tb"><svg width="32" height="32" viewBox="0 0 32 32"><rect width="32" height="32" rx="5" fill="#3d95f5"/><text x="16" y="25" text-anchor="middle" style="font:500 24px 'Noto Sans CJK SC',sans-serif;fill:#fff">预</text></svg></div>
          <div class="tray">
            ${tray.map(([w, b]) => html`<svg width=${w} height="16" viewBox="0 0 16 16">${b}</svg>`)}
          </div>
          <div class="clock">16:58<br />2021/8/3</div>
          <div class="desk"></div>
        </div>
      </div>

      <div class="panel">
        <div class="phead"><span>测量</span><div class="pclose">✖</div></div>
        <div class="pbody">
          ${panelRows.map(([i, t]) => html`<div class="prow">${ic(panelIcons[i], 18)}<span>${t}</span></div>`)}
        </div>
      </div>

      <div class="bd">
        <div class="bdl"><svg width="22" height="18" viewBox="0 0 22 18"><circle cx="11" cy="6" r="3.500" fill="none" stroke="#fff" stroke-width="2.200"/><circle cx="6" cy="12" r="3.500" fill="none" stroke="#fff" stroke-width="2.200"/><circle cx="16" cy="12" r="3.500" fill="none" stroke="#fff" stroke-width="2.200"/></svg></div>
        <div class="bdr">极速上传</div>
      </div>
    `;
  }
}
